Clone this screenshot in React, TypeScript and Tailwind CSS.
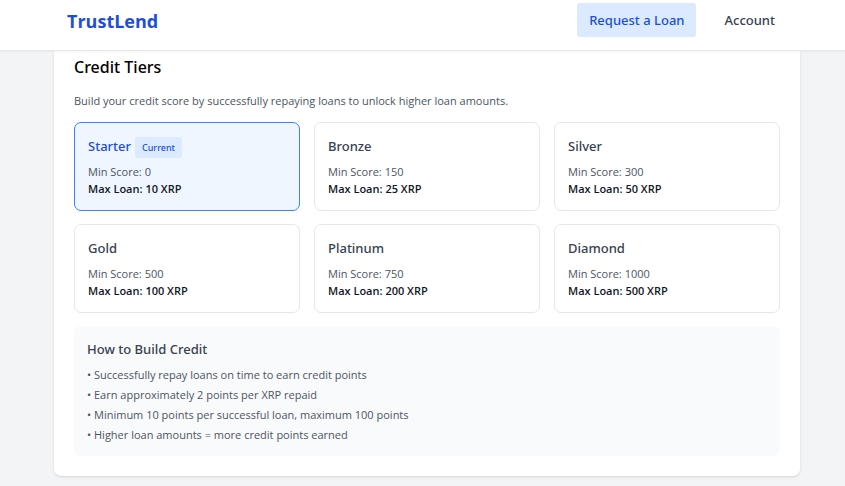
import React from "react";

type Tier = { name: string; minScore: number; maxLoan: number; current?: boolean };

const tiers: Tier[] = [
  { name: "Starter", minScore: 0, maxLoan: 10, current: true },
  { name: "Bronze", minScore: 150, maxLoan: 25 },
  { name: "Silver", minScore: 300, maxLoan: 50 },
  { name: "Gold", minScore: 500, maxLoan: 100 },
  { name: "Platinum", minScore: 750, maxLoan: 200 },
  { name: "Diamond", minScore: 1000, maxLoan: 500 },
];

const tips = [
  "Successfully repay loans on time to earn credit points",
  "Earn approximately 2 points per XRP repaid",
  "Minimum 10 points per successful loan, maximum 100 points",
  "Higher loan amounts = more credit points earned",
];

function Header() {
  return (
    <header className="relative border-b border-gray-200 bg-white pl-[9px] shadow-xs">
      <div className="mx-auto flex max-w-[746px] items-start justify-between px-[13px] pt-[3px] pb-[13px]">
        <span className="pt-1 text-[18px] leading-7 font-bold text-[#1d4ed8]">TrustLend</span>
        <nav className="flex gap-4 font-['Noto_Sans',sans-serif]">
          <button className="rounded-[3px] bg-[#dbeafe] px-3 py-[7px] text-[13px] leading-5 font-medium text-[#1d4ed8]">
            Request a Loan
          </button>
          <button className="px-3 py-[7px] text-[13px] leading-5 font-medium text-[#374151]">Account</button>
        </nav>
      </div>
    </header>
  );
}

function TierCard({ tier }: { tier: Tier }) {
  return (
    <article
      className={`rounded-[7px] border p-[13px] ${
        tier.current ? "border-[#3b82f6] bg-[#eff6ff]" : "border-[#e5e7eb] bg-white"
      }`}
    >
      <div className="flex h-[22px] items-start gap-1 font-['Noto_Sans',sans-serif]">
        <h3 className={`text-[13px] leading-5 font-medium ${tier.current ? "text-[#1d4ed8]" : "text-[#374151]"}`}>
          {tier.name}
        </h3>
        {tier.current && (
          <span className="mt-px rounded-[3px] bg-[#dbeafe] px-[7px] py-[3px] text-[9px] leading-[15px] font-medium text-[#1d4ed8]">
            Current
          </span>
        )}
      </div>
      <p className="mt-[5px] text-[11px] leading-[17px] text-[#4b5563]">Min Score: {tier.minScore}</p>
      <p className="text-[11px] leading-[17px] font-semibold text-[#111827]">Max Loan: {tier.maxLoan} XRP</p>
    </article>
  );
}

export default function App() {
  return (
    <div className="min-h-screen bg-[#f3f4f6] font-['Open_Sans','Noto_Sans',sans-serif]">
      <Header />
      <div className="pl-[9px]">
        <main className="mx-auto max-w-[746px] rounded-b-[7px] bg-white px-5 pt-[2px] pb-5 shadow-sm">
          <h2 className="font-['Noto_Sans',sans-serif] text-[16px] leading-7 font-medium text-black">Credit Tiers</h2>
          <p className="mt-[10px] text-[11px] leading-5 text-[#4b5563]">
            Build your credit score by successfully repaying loans to unlock higher loan amounts.
          </p>
          <div className="mt-[11px] grid grid-cols-3 gap-x-[14px] gap-y-[13px]">
            {tiers.map((tier) => (
              <TierCard key={tier.name} tier={tier} />
            ))}
          </div>
          <section className="mt-[13px] rounded-[7px] bg-[#f9fafb] px-[13px] pt-[13px] pb-[11px]">
            <h3 className="font-['Noto_Sans',sans-serif] text-[13px] leading-5 font-medium text-[#374151]">
              How to Build Credit
            </h3>
            <ul className="mt-[6px] text-[11px] leading-5 text-[#4b5563]">
              {tips.map((tip) => (
                <li key={tip}>• {tip}</li>
              ))}
            </ul>
          </section>
        </main>
      </div>
    </div>
  );
}
